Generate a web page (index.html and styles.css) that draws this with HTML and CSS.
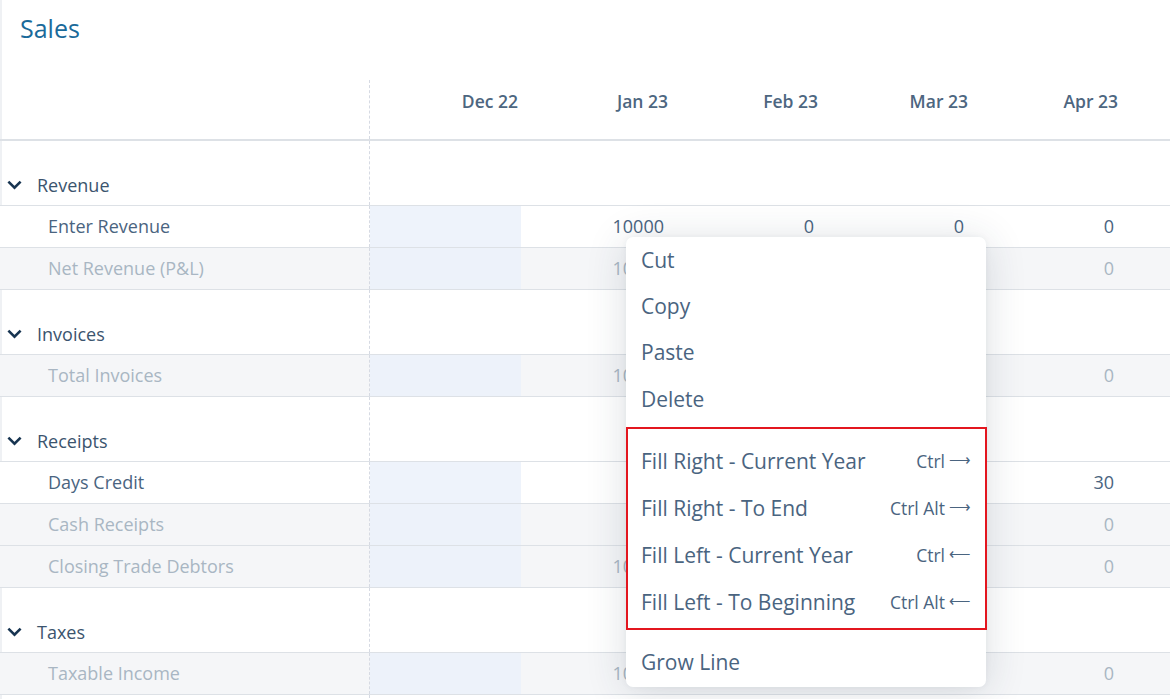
FILE: index.html
```html
<!DOCTYPE html>
<html>
<head>
<meta charset="utf-8">
<title>Sales</title>
<link rel="stylesheet" href="styles.css">
</head>
<body>
<div class="page">
  <h1 class="title">Sales</h1>
  <div class="table">
    <div class="row head">
      <div class="label"></div>
      <div class="cell">Dec 22</div>
      <div class="cell">Jan 23</div>
      <div class="cell">Feb 23</div>
      <div class="cell">Mar 23</div>
      <div class="cell">Apr 23</div>
      <div class="rest"></div>
    </div>

    <div class="row section">
      <div class="label"><svg class="chev" viewBox="0 0 14 9"><path d="M1.3 1.3 L7 7 L12.7 1.3" /></svg><span>Revenue</span></div>
      <div class="blank"></div>
    </div>
    <div class="row data input">
      <div class="label">Enter Revenue</div>
      <div class="cell first"></div>
      <div class="cell">10000</div>
      <div class="cell">0</div>
      <div class="cell">0</div>
      <div class="cell">0</div>
      <div class="rest"></div>
    </div>
    <div class="row data calc">
      <div class="label">Net Revenue (P&amp;L)</div>
      <div class="cell first"></div>
      <div class="cell">10000</div>
      <div class="cell">0</div>
      <div class="cell">0</div>
      <div class="cell">0</div>
      <div class="rest"></div>
    </div>

    <div class="row section">
      <div class="label"><svg class="chev" viewBox="0 0 14 9"><path d="M1.3 1.3 L7 7 L12.7 1.3" /></svg><span>Invoices</span></div>
      <div class="blank"></div>
    </div>
    <div class="row data calc">
      <div class="label">Total Invoices</div>
      <div class="cell first"></div>
      <div class="cell">10000</div>
      <div class="cell">0</div>
      <div class="cell">0</div>
      <div class="cell">0</div>
      <div class="rest"></div>
    </div>

    <div class="row section">
      <div class="label"><svg class="chev" viewBox="0 0 14 9"><path d="M1.3 1.3 L7 7 L12.7 1.3" /></svg><span>Receipts</span></div>
      <div class="blank"></div>
    </div>
    <div class="row data input">
      <div class="label">Days Credit</div>
      <div class="cell first"></div>
      <div class="cell">30</div>
      <div class="cell">30</div>
      <div class="cell">30</div>
      <div class="cell">30</div>
      <div class="rest"></div>
    </div>
    <div class="row data calc">
      <div class="label">Cash Receipts</div>
      <div class="cell first"></div>
      <div class="cell">0</div>
      <div class="cell">0</div>
      <div class="cell">0</div>
      <div class="cell">0</div>
      <div class="rest"></div>
    </div>
    <div class="row data calc">
      <div class="label">Closing Trade Debtors</div>
      <div class="cell first"></div>
      <div class="cell">10000</div>
      <div class="cell">0</div>
      <div class="cell">0</div>
      <div class="cell">0</div>
      <div class="rest"></div>
    </div>

    <div class="row section">
      <div class="label"><svg class="chev" viewBox="0 0 14 9"><path d="M1.3 1.3 L7 7 L12.7 1.3" /></svg><span>Taxes</span></div>
      <div class="blank"></div>
    </div>
    <div class="row data calc">
      <div class="label">Taxable Income</div>
      <div class="cell first"></div>
      <div class="cell">10000</div>
      <div class="cell">0</div>
      <div class="cell">0</div>
      <div class="cell">0</div>
      <div class="rest"></div>
    </div>
    <div class="row section">
      <div class="label"></div>
      <div class="blank"></div>
    </div>
  </div>

  <div class="menu">
    <div class="item">Cut</div>
    <div class="item">Copy</div>
    <div class="item">Paste</div>
    <div class="item">Delete</div>
    <div class="group">
      <div class="item"><span>Fill Right - Current Year</span><span class="key">Ctrl <span class="arrow">&#10230;</span></span></div>
      <div class="item"><span>Fill Right - To End</span><span class="key">Ctrl Alt <span class="arrow">&#10230;</span></span></div>
      <div class="item"><span>Fill Left - Current Year</span><span class="key">Ctrl <span class="arrow">&#10229;</span></span></div>
      <div class="item"><span>Fill Left - To Beginning</span><span class="key">Ctrl Alt <span class="arrow">&#10229;</span></span></div>
    </div>
    <div class="item grow">Grow Line</div>
  </div>
</div>
</body>
</html>
```

FILE: styles.css
```css
html, body {
  margin: 0;
  padding: 0;
  background: #ffffff;
  font-family: "Open Sans", "Noto Sans", "Liberation Sans", sans-serif;
  color: #4a6480;
}

.page {
  position: relative;
  width: 1170px;
  height: 699px;
  overflow: hidden;
  box-shadow: inset 2px 0 0 #eff1f4;
}

.title {
  margin: 0;
  height: 80px;
  padding: 12px 0 0 20px;
  box-sizing: border-box;
  font-size: 25px;
  font-weight: 500;
  color: #1a6a9a;
  line-height: 32px;
}

.table {
  display: flex;
  flex-direction: column;
}

.row {
  display: grid;
  grid-template-columns: 370px 151px 150px 150px 150px 150px 1fr;
  box-sizing: border-box;
}

.row .label {
  border-right: 1px dashed #d6dae3;
  box-sizing: border-box;
  display: flex;
  align-items: center;
  white-space: nowrap;
}

.row .cell {
  display: flex;
  align-items: center;
  justify-content: flex-end;
}

.head {
  height: 61px;
  border-bottom: 2px solid #dde1e6;
}

.head .cell {
  font-size: 17.5px;
  font-weight: 600;
  color: #4d6680;
  padding-right: 3px;
  padding-bottom: 18px;
}

.section {
  height: 65px;
  grid-template-columns: 370px 1fr;
  border-bottom: 1px solid #dde1e6;
}

.section .label {
  align-items: flex-end;
  padding: 0 0 7px 7px;
  font-size: 18px;
  font-weight: 500;
  color: #3b546e;
}

.section .label span {
  line-height: 25px;
}

.chev {
  width: 15px;
  height: 10px;
  margin: 0 15px 8px 0;
  fill: none;
  stroke: #173451;
  stroke-width: 2.4;
}

.data {
  height: 42px;
  border-bottom: 1px solid #dde1e6;
}

.data .label {
  padding-left: 48px;
  padding-bottom: 2px;
  font-size: 18px;
}

.data .cell {
  font-size: 18px;
  font-weight: 500;
  padding-right: 7px;
  padding-bottom: 2px;
}

.data .cell.first {
  background: #eef3fb;
}

.input {
  background: #ffffff;
}

.input .label,
.input .cell {
  color: #4a6480;
}

.calc {
  background: #f5f6f8;
}

.calc .label,
.calc .cell {
  color: #a9b6c3;
}

.calc .cell.first {
  background: #edf2fa;
}

.menu {
  position: absolute;
  left: 626px;
  top: 237px;
  width: 360px;
  height: 450px;
  background: #ffffff;
  border-radius: 7px;
  box-shadow: 0 4px 40px rgba(40, 55, 75, 0.16), 0 0 6px rgba(40, 55, 75, 0.05);
  box-sizing: border-box;
}

.menu .item {
  height: 46px;
  display: flex;
  align-items: center;
  justify-content: space-between;
  padding: 0 15px;
  font-size: 21px;
  color: #4a6480;
  box-sizing: border-box;
  white-space: nowrap;
}

.menu > .item:nth-child(4) {
  padding-top: 2px;
}

.group {
  margin: 6px 0 0;
  width: 361px;
  border: 2px solid #e3161f;
  padding: 8px 0 3px;
  box-sizing: border-box;
}

.group .item {
  height: 47px;
  padding: 0 14px 0 13px;
}

.key {
  font-size: 17.5px;
  color: #4a6480;
  display: flex;
  align-items: center;
  gap: 4px;
}

.arrow {
  font-family: "DejaVu Sans", sans-serif;
  font-size: 15px;
  line-height: 1;
  font-weight: 300;
}

.menu .grow {
  margin-top: 9px;
}
```
